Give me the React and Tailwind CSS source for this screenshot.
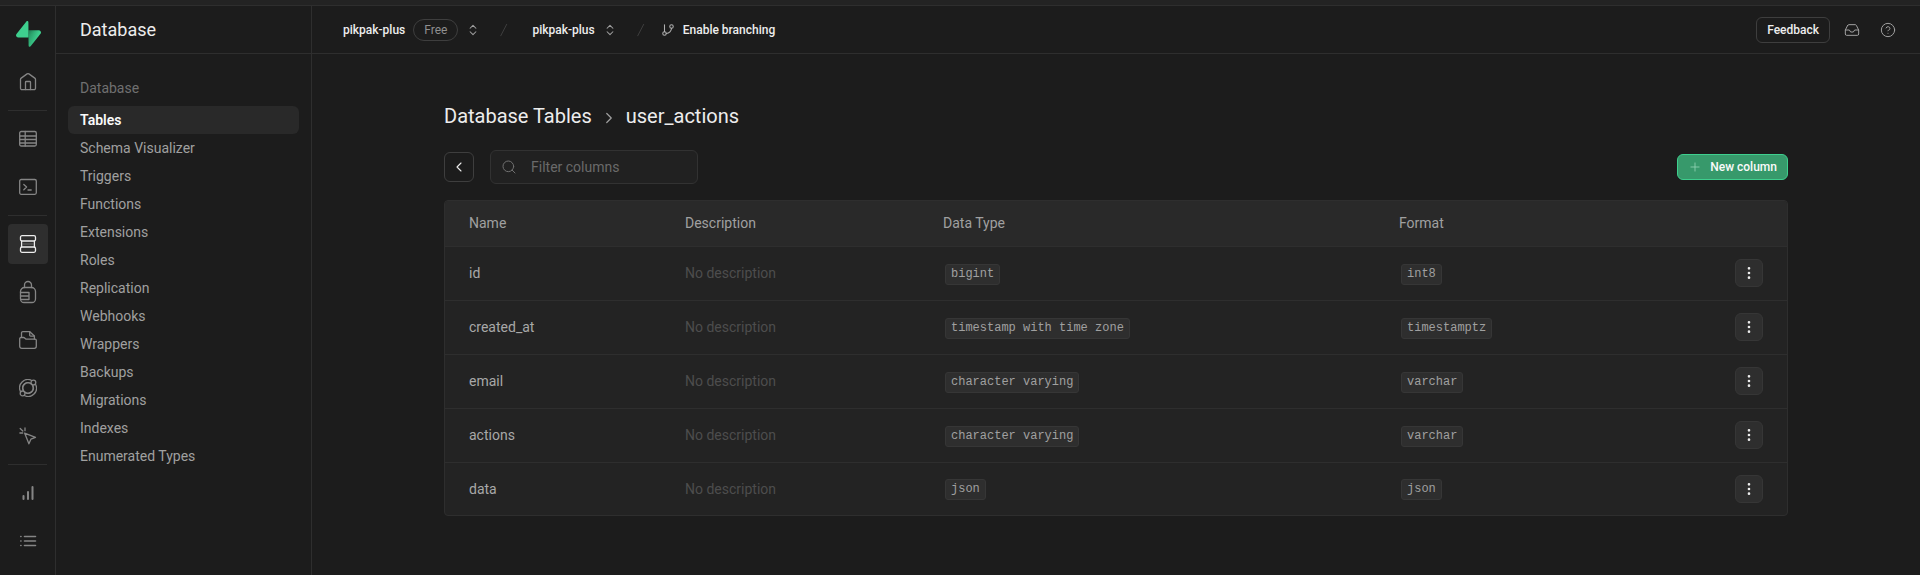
import React from "react";
import {
  ChevronLeft,
  ChevronRight,
  ChevronsUpDown,
  CircleHelp,
  GitBranch,
  Inbox,
  MoreVertical,
  Plus,
  Search,
} from "lucide-react";

function Icon({ children, height = 18, strokeWidth = 1.3 }) {
  return (
    <svg
      width={18}
      height={height}
      viewBox={`0 0 18 ${height}`}
      fill="none"
      stroke="currentColor"
      strokeWidth={strokeWidth}
      strokeLinecap="round"
      strokeLinejoin="round"
      aria-hidden="true"
    >
      {children}
    </svg>
  );
}

const HomeIcon = () => (
  <Icon>
    <path d="M1.5 6.4a1.6 1.6 0 0 1 .7-1.3L8.1.9a1.6 1.6 0 0 1 1.8 0l5.9 4.2a1.6 1.6 0 0 1 .7 1.3v8.8a1.5 1.5 0 0 1-1.5 1.5H3a1.5 1.5 0 0 1-1.5-1.5z" />
    <path d="M6.5 16.5v-7.2a.8.8 0 0 1 .8-.8h3.4a.8.8 0 0 1 .8.8v7.2" />
  </Icon>
);
const TableIcon = () => (
  <Icon>
    <rect x="0.7" y="1.5" width="16.6" height="14.5" rx="1.5" />
    <path d="M.7 6h16.6M.7 9.5h16.6M.7 13h16.6M6.2 1.5V16" />
  </Icon>
);
const SqlIcon = () => (
  <Icon>
    <rect x="0.7" y="1.5" width="16.6" height="14.8" rx="1.5" />
    <path d="m4.8 6.5 2.8 2.6-2.8 2.6M9 12h3.2" />
  </Icon>
);
const DatabaseIcon = () => (
  <Icon>
    <rect x="1.5" y="0.7" width="15" height="5.3" rx="1.5" />
    <rect x="1.5" y="12" width="15" height="5.3" rx="1.5" />
    <path d="M2.6 6v6M15.4 6v6" />
    <path d="M4 9h10" strokeWidth="0.6" opacity="0.5" />
  </Icon>
);
const AuthIcon = () => (
  <Icon height={24}>
    <path d="M5.5 7.5V5a3.5 3.5 0 0 1 7 0v2.5" />
    <path d="M1.5 11.5a4 4 0 0 1 4-4h7a4 4 0 0 1 4 4V19a3.5 3.5 0 0 1-3.5 3.5H5A3.5 3.5 0 0 1 1.5 19z" />
    <path d="M1.5 12.5H10v7H1.8M1.5 16H10" />
  </Icon>
);
const StorageIcon = () => (
  <Icon>
    <path d="M2.5 6.2V2A1.3 1.3 0 0 1 3.8.7h7L15.4 5v3" />
    <path d="M10.7.9v3.3a.9.9 0 0 0 .9.9h3.6" />
    <path d="M.7 7.7a1.2 1.2 0 0 1 1.2-1.2h2.7a1.5 1.5 0 0 1 1 .4l.9.8a1.5 1.5 0 0 0 1 .4h8.6a1.2 1.2 0 0 1 1.2 1.2v6a2 2 0 0 1-2 2H2.7a2 2 0 0 1-2-2z" />
  </Icon>
);
const FunctionsIcon = () => (
  <Icon>
    <path d="M12.7 1.5A8.3 8.3 0 0 0 1.5 12.6M5.3 16.5A8.3 8.3 0 0 0 16.5 5.3" />
    <path d="M12.4 5A5.3 5.3 0 0 0 4.2 11.3M5.6 13A5.3 5.3 0 0 0 13.8 6.7" />
    <circle cx="14.4" cy="3.6" r="2.4" />
    <circle cx="3.6" cy="14.4" r="2.4" />
    <circle cx="9" cy="9" r="5.3" />
  </Icon>
);
const RealtimeIcon = () => (
  <Icon>
    <path d="m5.6 6.1 10.9 4.2-4.6 1.9-2 4.6zM6 .9v2.8M.9 6h2.8M1.2 1.5l2.6 2.5" />
  </Icon>
);
const ReportsIcon = () => (
  <Icon strokeWidth={2}>
    <path d="M4.5 12v3M9 8v7M13.5 3v12" />
  </Icon>
);
const LogsIcon = () => (
  <Icon strokeWidth={1.6}>
    <path d="M5.5 4.5h11M5.5 9h11M5.5 13.5h11M1.8 4.5h.2M1.8 9h.2M1.8 13.5h.2" />
  </Icon>
);

const railItems = [
  { label: "Home", icon: HomeIcon, divider: true },
  { label: "Table Editor", icon: TableIcon },
  { label: "SQL Editor", icon: SqlIcon, divider: true },
  { label: "Database", icon: DatabaseIcon, active: true },
  { label: "Authentication", icon: AuthIcon },
  { label: "Storage", icon: StorageIcon },
  { label: "Edge Functions", icon: FunctionsIcon },
  { label: "Realtime", icon: RealtimeIcon, divider: true },
  { label: "Reports", icon: ReportsIcon },
  { label: "Logs", icon: LogsIcon },
];

const menuItems = [
  "Tables",
  "Schema Visualizer",
  "Triggers",
  "Functions",
  "Extensions",
  "Roles",
  "Replication",
  "Webhooks",
  "Wrappers",
  "Backups",
  "Migrations",
  "Indexes",
  "Enumerated Types",
];

const columns = [
  { name: "id", type: "bigint", format: "int8" },
  { name: "created_at", type: "timestamp with time zone", format: "timestamptz" },
  { name: "email", type: "character varying", format: "varchar" },
  { name: "actions", type: "character varying", format: "varchar" },
  { name: "data", type: "json", format: "json" },
];

function Logo() {
  return (
    <svg width="25" height="26" viewBox="0 0 109 113" fill="none" aria-hidden="true">
      <defs>
        <linearGradient id="bolt" x1="53.97" y1="54.97" x2="94.16" y2="71.83" gradientUnits="userSpaceOnUse">
          <stop stopColor="#249361" />
          <stop offset="1" stopColor="#3ECF8E" />
        </linearGradient>
        <linearGradient id="shade" x1="36.16" y1="30.58" x2="54.48" y2="65.08" gradientUnits="userSpaceOnUse">
          <stop stopOpacity="0.2" />
          <stop offset="1" stopOpacity="0" />
        </linearGradient>
      </defs>
      <path
        fill="url(#bolt)"
        d="M63.7076 110.284C60.8481 113.885 55.0502 111.912 54.9813 107.314L53.9738 40.0627L99.1935 40.0627C107.384 40.0627 111.952 49.5228 106.859 55.9374L63.7076 110.284Z"
      />
      <path
        fill="url(#shade)"
        d="M63.7076 110.284C60.8481 113.885 55.0502 111.912 54.9813 107.314L53.9738 40.0627L99.1935 40.0627C107.384 40.0627 111.952 49.5228 106.859 55.9374L63.7076 110.284Z"
      />
      <path
        fill="#3ECF8E"
        d="M45.317 2.07103C48.1765 -1.53037 53.9745 0.442937 54.0434 5.041L54.4849 72.2922H9.83113C1.64038 72.2922 -2.92775 62.8321 2.1655 56.4175L45.317 2.07103Z"
      />
    </svg>
  );
}

function Rail() {
  return (
    <nav aria-label="Product" className="flex w-14 shrink-0 flex-col items-start gap-2 border-r border-[#2e2e2e] p-2">
      <a href="#home" aria-label="Supabase" className="flex size-10 shrink-0 items-center justify-center">
        <Logo />
      </a>
      {railItems.map(({ label, icon: Glyph, active, divider }) => (
        <React.Fragment key={label}>
          <a
            href={"#" + label}
            aria-label={label}
            className={
              active
                ? "flex size-10 shrink-0 items-center justify-center rounded bg-[#2e2e2e] text-[#ededed]"
                : "flex size-10 shrink-0 items-center justify-center rounded text-[#858585]"
            }
          >
            <Glyph />
          </a>
          {divider && <div className="h-px w-full bg-[#2e2e2e]" />}
        </React.Fragment>
      ))}
    </nav>
  );
}

function Menu() {
  return (
    <aside className="w-64 shrink-0 border-r border-[#2e2e2e]">
      <div className="flex h-12 items-center border-b border-[#2e2e2e] px-6">
        <h2 className="text-lg text-[#ededed]">Database</h2>
      </div>
      <div className="px-3 pt-6">
        <h3 className="mb-2 px-3 text-sm leading-5 text-[#707070]">Database</h3>
        <ul>
          {menuItems.map((item, i) => (
            <li key={item}>
              <a
                href={"#" + item}
                className={
                  i === 0
                    ? "flex h-7 items-center rounded-md bg-[#292929] px-3 text-sm font-semibold text-[#fafafa]"
                    : "flex h-7 items-center rounded-md px-3 text-sm text-[#a0a0a0]"
                }
              >
                {item}
              </a>
            </li>
          ))}
        </ul>
      </div>
    </aside>
  );
}

function Slash() {
  return (
    <svg width="16" height="16" viewBox="0 0 24 24" stroke="#3e3e3e" strokeWidth="1.5" strokeLinecap="round" fill="none" aria-hidden="true">
      <path d="M16 3.549L7.12 20.6" />
    </svg>
  );
}

function TopBar() {
  return (
    <header className="flex h-12 items-center justify-between border-b border-[#2e2e2e] pr-6 pl-[31px] text-xs font-medium text-[#ededed]">
      <div className="flex items-center">
        <button type="button" className="flex items-center gap-2">
          pikpak-plus
          <span className="rounded-full border border-[#3e3e3e] px-2.5 py-0.5 font-normal text-[#8f8f8f]">Free</span>
          <ChevronsUpDown size={14} strokeWidth={1.8} className="text-[#a0a0a0]" />
        </button>
        <span className="mr-5 ml-4"><Slash /></span>
        <button type="button" className="flex items-center gap-2">
          pikpak-plus
          <ChevronsUpDown size={14} strokeWidth={1.8} className="text-[#a0a0a0]" />
        </button>
        <span className="mr-3 ml-4"><Slash /></span>
        <button type="button" className="flex items-center gap-2">
          <GitBranch size={14} strokeWidth={1.8} className="text-[#b0b0b0]" />
          Enable branching
        </button>
      </div>
      <div className="flex items-center">
        <button type="button" className="mr-3.5 h-[26px] rounded-md border border-[#3e3e3e] px-2.5">Feedback</button>
        <button type="button" aria-label="Notifications" className="mr-5 text-[#a0a0a0]">
          <Inbox size={16} strokeWidth={1.5} />
        </button>
        <button type="button" aria-label="Help" className="text-[#a0a0a0]">
          <CircleHelp size={16} strokeWidth={1.5} />
        </button>
      </div>
    </header>
  );
}

function Code({ children }) {
  return (
    <code className="ml-0.5 inline-block rounded-[3px] border border-[#363636] bg-[#2e2e2e] px-[5px] font-['Liberation_Mono',monospace] text-xs leading-[19px] text-[#a0a0a0]">
      {children}
    </code>
  );
}

function ColumnsTable() {
  return (
    <div className="overflow-hidden rounded border border-[#2e2e2e] bg-[#232323]">
      <table className="w-full table-fixed text-left text-sm">
        <colgroup>
          <col className="w-60" />
          <col className="w-[258px]" />
          <col className="w-[456px]" />
          <col />
          <col className="w-24" />
        </colgroup>
        <thead className="bg-[#292929] text-[#a0a0a0]">
          <tr className="h-[45px] border-b border-[#2e2e2e]">
            <th className="pl-6 font-normal">Name</th>
            <th className="font-normal">Description</th>
            <th className="font-normal">Data Type</th>
            <th className="font-normal">Format</th>
            <th aria-label="Actions" />
          </tr>
        </thead>
        <tbody>
          {columns.map((c) => (
            <tr key={c.name} className="h-[54px] border-b border-[#2e2e2e] last:h-[53px] last:border-b-0">
              <td className="pl-6 text-[#a8a8a8]">{c.name}</td>
              <td className="text-[#4d4d4d]">No description</td>
              <td><Code>{c.type}</Code></td>
              <td><Code>{c.format}</Code></td>
              <td className="pr-6">
                <button
                  type="button"
                  aria-label={"Options for " + c.name}
                  className="ml-auto flex size-7 items-center justify-center rounded-md border border-[#363636] bg-[#2e2e2e] text-[#ededed]"
                >
                  <MoreVertical size={16} strokeWidth={2} />
                </button>
              </td>
            </tr>
          ))}
        </tbody>
      </table>
    </div>
  );
}

export default function App() {
  return (
    <div className="flex min-h-screen flex-col bg-[#1c1c1c] font-['Roboto',sans-serif] text-[#ededed]">
      <div className="h-1.5 border-b border-[#2e2e2e] bg-[#232323]" />
      <div className="flex flex-1">
        <Rail />
        <Menu />
        <div className="min-w-0 flex-1">
          <TopBar />
          <main className="mx-auto w-full max-w-[1344px] pt-12">
            <div className="flex h-7 items-center gap-2 text-xl">
              <a href="#Tables">Database Tables</a>
              <ChevronRight size={18} strokeWidth={1.6} className="mt-1 text-[#a0a0a0]" />
              <h1>user_actions</h1>
            </div>
            <div className="mt-5 mb-4 flex items-center gap-4">
              <button
                type="button"
                aria-label="Back"
                className="flex size-[30px] items-center justify-center rounded-md border border-[#3e3e3e]"
              >
                <ChevronLeft size={16} strokeWidth={1.6} />
              </button>
              <label className="flex h-[34px] w-52 items-center rounded-md border border-[#323232] bg-[#212121] px-2.5">
                <Search size={16} strokeWidth={1.5} className="shrink-0 text-[#707070]" />
                <input
                  type="text"
                  aria-label="Filter columns"
                  placeholder="Filter columns"
                  className="ml-3.5 w-full min-w-0 bg-transparent text-sm outline-none placeholder:text-[#6a6a6a]"
                />
              </label>
              <button
                type="button"
                className="ml-auto flex h-[26px] items-center gap-2 rounded-md border border-[#3ecf8e] bg-[#37996b] px-2.5 text-xs font-medium text-[#fafafa]"
              >
                <Plus size={14} strokeWidth={1.5} className="text-[#8fd0b0]" />
                New column
              </button>
            </div>
            <ColumnsTable />
          </main>
        </div>
      </div>
    </div>
  );
}
